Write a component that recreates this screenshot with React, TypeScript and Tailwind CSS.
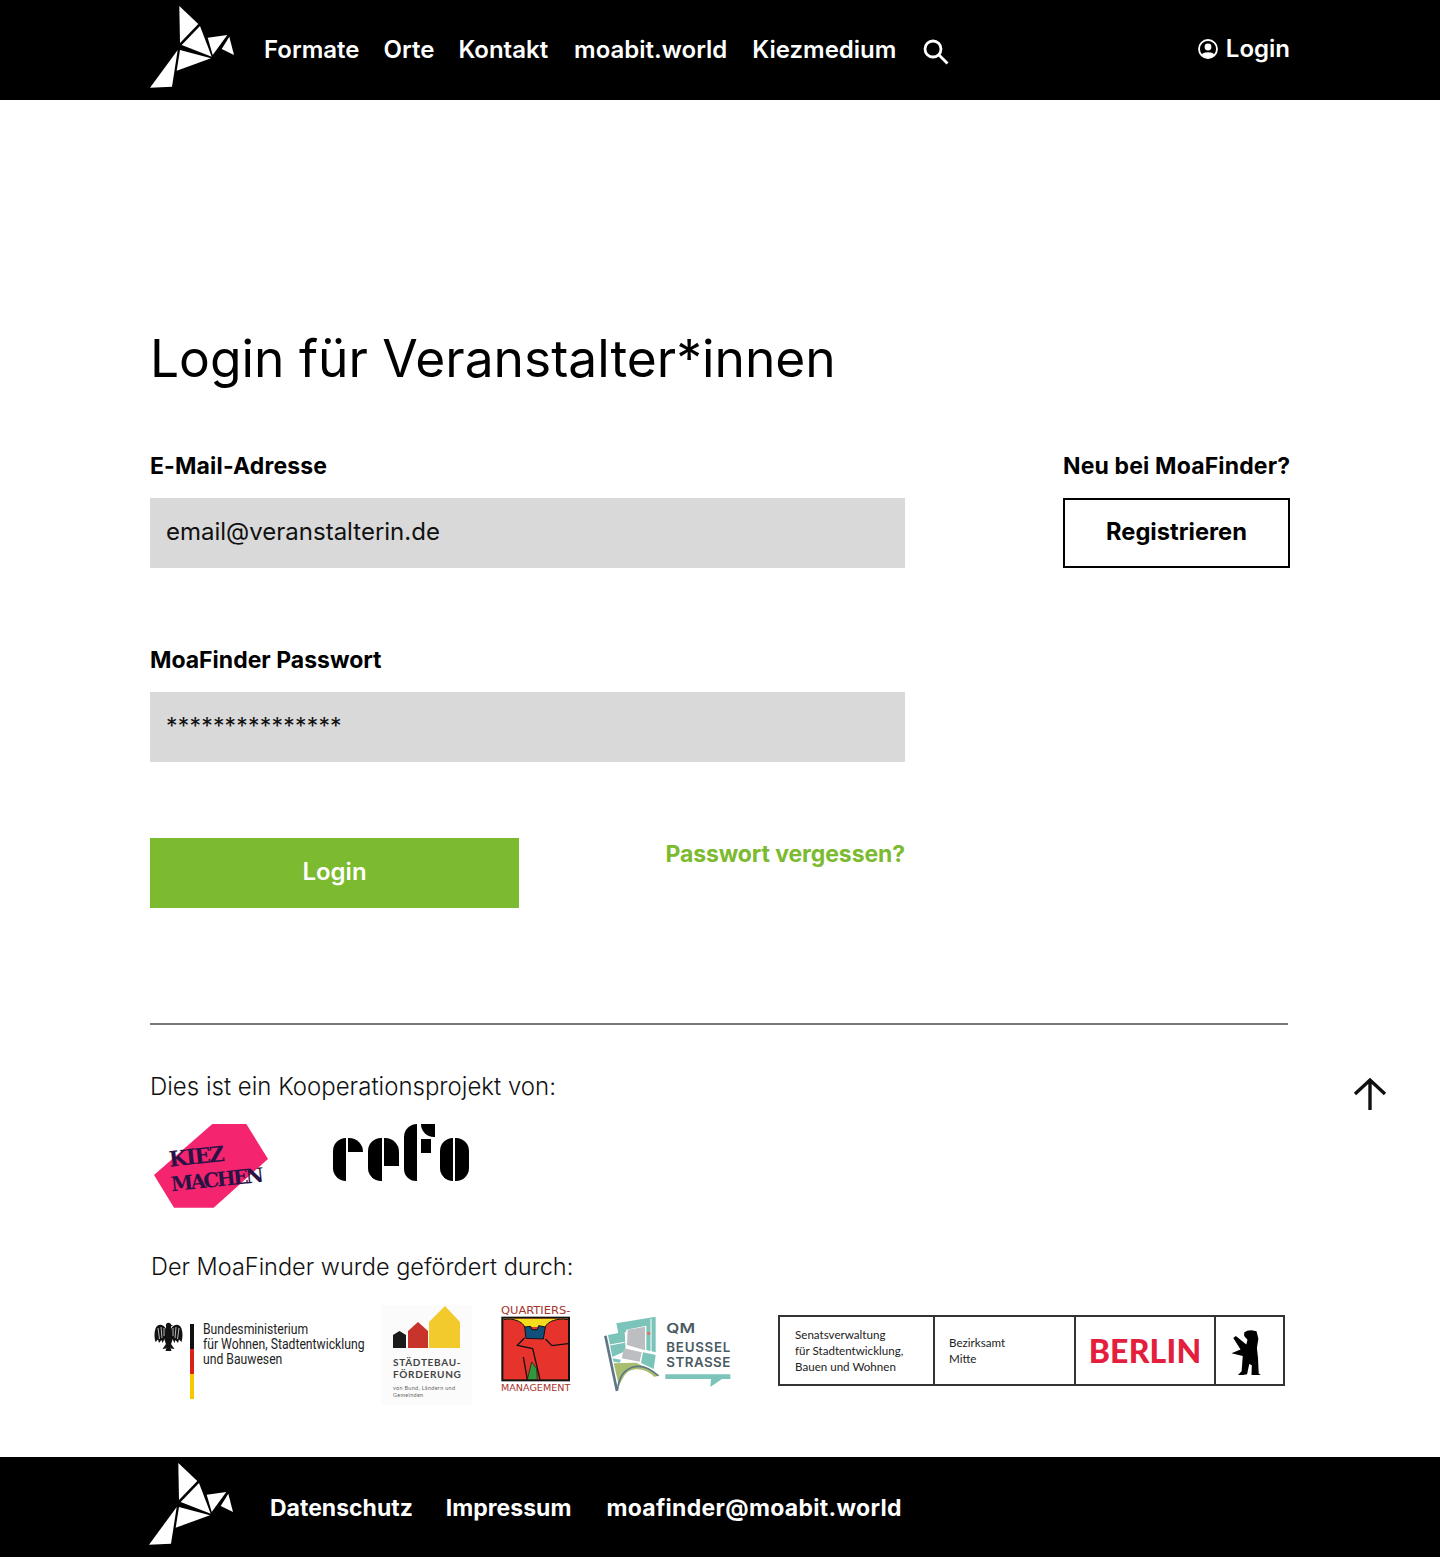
import React from 'react';

const font = { fontFamily: 'Inter, sans-serif' };

const BirdLogo: React.FC = () => (
  <svg width="85" height="83" viewBox="10 5 85 83" fill="#fff" aria-label="MoaFinder">
    <polygon points="39.3,6 58.3,24 40,43" />
    <polygon points="60,26 41.7,45 71.7,56.7" />
    <polygon points="67.7,37.7 87.3,35 72.7,55" />
    <polygon points="89.3,36.7 94,55 81.7,49" />
    <polygon points="40,50 71,58.3 36.7,70.7" />
    <polygon points="37.7,50 32,86.7 10,87.7" />
  </svg>
);

const SearchIcon: React.FC = () => (
  <svg width="26" height="26" viewBox="0 0 26 26" fill="none" stroke="#fff" strokeWidth="2.8">
    <circle cx="10" cy="10" r="8" />
    <line x1="16" y1="16" x2="24.5" y2="24.5" />
  </svg>
);

const UserIcon: React.FC = () => (
  <svg width="20" height="20" viewBox="0 0 20 20" fill="none" stroke="#fff" strokeWidth="1.8">
    <circle cx="10" cy="10" r="9" />
    <circle cx="10" cy="8" r="3.4" fill="#fff" stroke="none" />
    <path d="M3.8 15.5 C5.5 12.5 14.5 12.5 16.2 15.5 C14 19.5 6 19.5 3.8 15.5Z" fill="#fff" stroke="none" />
  </svg>
);

const KiezMachen: React.FC = () => (
  <svg width="116" height="84" viewBox="43 42 348 252" aria-label="Kiez machen">
    <polygon points="218,42 320,42 385,147 222,293 103,293 43,195" fill="#f4246f" />
    <g fontFamily="'DejaVu Serif', serif" fontWeight="700" fill="#2a1245">
      <text x="90" y="170" fontSize="64" transform="rotate(-6 90 170)" textLength="168">KIEZ</text>
      <text x="96" y="244" fontSize="60" transform="rotate(-6 96 244)" textLength="280">MACHEN</text>
    </g>
  </svg>
);

// stencil logo, built from rounded blocks
const RefoLogo: React.FC = () => (
  <div className="flex items-end gap-[5px] h-[58px]" aria-label="refo">
    <div className="flex gap-[2px] items-start">
      <div className="w-[13px] h-[43px] bg-black rounded-l-[13px]" />
      <div className="w-[15px] h-[14px] bg-black rounded-tr-[14px]" />
    </div>
    <div className="flex gap-[2px] items-start">
      <div className="w-[14px] h-[43px] bg-black rounded-l-[13px]" />
      <div className="w-[15px] h-[28px] bg-black rounded-tr-[14px]" />
    </div>
    <div className="flex gap-[4px] items-start">
      <div className="w-[13px] h-[57px] bg-black rounded-tl-[14px] rounded-bl-[13px]" />
      <div className="flex flex-col gap-[2px]">
        <div className="w-[14px] h-[13px] bg-black rounded-bl-[13px]" />
        <div className="w-[10px] h-[14px] bg-black" />
      </div>
    </div>
    <div className="flex gap-[2px] items-start">
      <div className="w-[13px] h-[43px] bg-black rounded-l-[13px]" />
      <div className="w-[14px] h-[43px] bg-black rounded-r-[13px]" />
    </div>
  </div>
);

const Eagle: React.FC = () => (
  <svg width="29" height="29" viewBox="0 0 29 29" fill="#111" aria-hidden="true">
    <circle cx="14.5" cy="3.4" r="2.6" />
    <polygon points="16,2.4 19,3.6 16,5" />
    <polygon points="12,5 17,5 19,16 16.5,24 12.5,24 10,16" />
    <path d="M12 7 C9 1.5 3.5 1.5 1.5 6.5 C0 11 .3 16 1.5 20 L4 17.5 L5 21 L7.5 18 L8.5 21 L11 16Z" />
    <path d="M17 7 C20 1.5 25.5 1.5 27.5 6.5 C29 11 28.7 16 27.5 20 L25 17.5 L24 21 L21.5 18 L20.5 21 L18 16Z" />
    <path d="M4 6 L5.5 17 M7 5 L8 16 M10 6 L10 14 M25 6 L23.5 17 M22 5 L21 16 M19 6 L19 14" stroke="#fff" strokeWidth="0.7" fill="none" />
    <polygon points="12,22 8.5,27 12,26.5 14,24" />
    <polygon points="17,22 20.5,27 17,26.5 15,24" />
    <polygon points="13,24 16,24 17.5,29 11.5,29" />
  </svg>
);

const Bund: React.FC = () => (
  <div className="flex items-start w-[220px] h-[95px] pt-[19px]">
    <div className="w-[29px] ml-[4px] mt-[-2px]"><Eagle /></div>
    <div className="ml-[7px] flex flex-col w-[4px] shrink-0">
      <div className="h-[25px] bg-[#111]" />
      <div className="h-[25px] bg-[#d8201c]" />
      <div className="h-[25px] bg-[#f5c800]" />
    </div>
    <div className="ml-[9px] text-[14px] leading-[15px] text-[#222] origin-left scale-x-[0.87] whitespace-nowrap mt-[-2px]" style={{ fontFamily: 'Roboto, sans-serif' }}>
      Bundesministerium<br />für Wohnen, Stadtentwicklung<br />und Bauwesen
    </div>
  </div>
);

const Staedtebau: React.FC = () => (
  <div className="w-[91px] h-[100px] bg-[#fbfbfb] ml-[11px] flex flex-col items-start pl-[12px] pt-[1px]" style={{ fontFamily: 'Lato, sans-serif' }}>
    <svg width="68" height="43" viewBox="0 0 68 43" aria-hidden="true">
      <polygon points="0,42 0,29 6.5,25 13,29 13,42" fill="#1b1b1b" />
      <polygon points="15,42 15,25 25,16 35,25 35,42" fill="#c8342c" />
      <polygon points="36,42 36,16 52,0 67,16 67,42" fill="#f2ca2c" />
    </svg>
    <div className="mt-[7px] text-[10px] leading-[12px] font-bold tracking-[0.7px] text-[#444] whitespace-nowrap">STÄDTEBAU-<br />FÖRDERUNG</div>
    <div className="mt-[5px] text-[5.5px] leading-[7px] tracking-[0.3px] text-[#666] whitespace-nowrap">von Bund, Ländern und<br />Gemeinden</div>
  </div>
);

const Quartiers: React.FC = () => (
  <svg className="ml-[28px] mt-[-3px]" width="72" height="96" viewBox="30 25 216 288" aria-label="Quartiersmanagement">
    <text x="33" y="62" fontFamily="'DejaVu Sans Condensed', 'DejaVu Sans', sans-serif" fontSize="32" fill="#a8322c" textLength="208" lengthAdjust="spacingAndGlyphs">QUARTIERS-</text>
    <rect x="37" y="72" width="200" height="188" fill="#e6342c" stroke="#111" strokeWidth="6" />
    <path d="M40 75 L234 75 L234 78 C200 72 172 84 166 100 L104 100 C98 84 70 72 40 78Z" fill="#f5dc1e" />
    <path d="M40 78 C70 72 98 84 104 100 M234 78 C200 72 172 84 166 100" fill="none" stroke="#111" strokeWidth="3" />
    <path d="M104 100 L122 98 L126 108 L142 108 L146 96 L166 100 L160 136 L108 134Z" fill="#10507a" stroke="#111" strokeWidth="3" />
    <path d="M112 258 L125 205 L140 225 L142 258Z" fill="#2e9a3c" stroke="#111" strokeWidth="2" />
    <path d="M104 132 L82 155 L128 165 L150 258 M166 136 L186 156 L234 150 M112 258 L100 190" fill="none" stroke="#111" strokeWidth="4" />
    <text x="33" y="291" fontFamily="'DejaVu Sans Condensed', 'DejaVu Sans', sans-serif" fontSize="28" fill="#a8322c" textLength="208" lengthAdjust="spacingAndGlyphs">MANAGEMENT</text>
  </svg>
);

const Beussel: React.FC = () => (
  <svg className="ml-[31px] mt-[10px]" width="130" height="80" viewBox="340 60 390 240" aria-label="QM Beusselstrasse">
    <polygon points="380,85 498,65 498,172 470,165 470,92 410,104 408,112 386,115" fill="#7cc4ba" />
    <polygon points="355,120 405,110 408,168 368,186" fill="#7cc4ba" />
    <polygon points="414,104 466,95 466,166 412,150" fill="#bcbec2" />
    <polygon points="403,160 456,172 450,200 396,190" fill="#bcbec2" />
    <polygon points="460,172 498,180 492,222 454,204" fill="#7cc4ba" />
    <polygon points="368,190 394,194 390,203 372,200" fill="#7cc4ba" />
    <path d="M484 72 L484 170 M360 150 L405 142" stroke="#fff" strokeWidth="3" fill="none" />
    <path d="M372 205 L440 203 L510 240 L494 246 C470 218 420 212 402 245 L388 272Z" fill="#a8bd6e" />
    <path d="M347 122 L382 288" stroke="#5e7686" strokeWidth="8" fill="none" />
    <path d="M384 284 C390 215 450 190 506 243" stroke="#5e7686" strokeWidth="5" fill="none" />
    <circle cx="477" cy="115" r="5" fill="#ee6a5a" />
    <g fontFamily="Inter, sans-serif" fontWeight="600" fill="#4a5a63">
      <text x="530" y="114" fontSize="40" textLength="86" lengthAdjust="spacingAndGlyphs">QM</text>
      <text x="530" y="171" fontSize="40" textLength="192">BEUSSEL</text>
      <text x="530" y="217" fontSize="40" textLength="192">STRASSE</text>
    </g>
    <polygon points="527,238 722,238 722,252 697,252 662,276 664,252 527,252" fill="#7cc4ba" />
  </svg>
);

const Bear: React.FC = () => (
  <svg width="48" height="48" viewBox="30 20 132 132" fill="#000" aria-hidden="true">
    <path d="M80 35 L88 30 L100 29 L114 32 L119 52 L115 78 L118 105 L120 148 L130 155 L100 155 L101 125 L94 122 L88 150 L60 155 L73 142 L76 100 L45 92 L70 82 L50 50 L57 45 L86 68 L89 55 L80 45Z" />
  </svg>
);

const BerlinBox: React.FC = () => (
  <div className="ml-[45px] mt-[10px] w-[507px] h-[71px] border-2 border-[#333] flex text-[#222]" style={{ fontFamily: 'Lato, sans-serif' }}>
    <div className="w-[155px] border-r-2 border-[#333] pl-[15px] flex items-center text-[11.6px] leading-[16px] whitespace-nowrap">
      <span>Senatsverwaltung<br />für Stadtentwicklung,<br />Bauen und Wohnen</span>
    </div>
    <div className="w-[141px] border-r-2 border-[#333] pl-[14px] flex items-center text-[11.6px] leading-[16px]">
      <span>Bezirksamt<br />Mitte</span>
    </div>
    <div className="w-[140px] border-r-2 border-[#333] flex items-center justify-center text-[32px] font-black tracking-[0.2px] text-[#e31f3d]">
      BERLIN
    </div>
    <div className="flex-1 flex items-center justify-center"><Bear /></div>
  </div>
);

const App: React.FC = () => {
  return (
    <div className="relative bg-white min-h-[1557px] flex flex-col" style={font}>
      <header className="h-[100px] bg-black text-white px-[150px] flex items-center">
        <div className="mt-[-8px]"><BirdLogo /></div>
        <nav className="ml-[29px] flex items-center gap-[25px] text-[24px] font-semibold">
          <a href="#">Formate</a>
          <a href="#" className="ml-[-1px]">Orte</a>
          <a href="#" className="ml-[-1px]">Kontakt</a>
          <a href="#" className="ml-[1px]">moabit.world</a>
          <a href="#">Kiezmedium</a>
          <button className="ml-[2px] mt-[4px]" aria-label="Suche"><SearchIcon /></button>
        </nav>
        <a href="#" className="ml-auto flex items-center gap-[8px] text-[24px] font-semibold mt-[-2px]">
          <UserIcon />
          Login
        </a>
      </header>

      <main className="px-[150px] flex-1">
        <h1 className="mt-[224px] text-[51.5px] leading-[68px] font-normal text-black">Login für Veranstalter*innen</h1>

        <div className="mt-[60px] flex justify-between items-start">
          <div className="w-[755px]">
            <label className="block text-[23px] leading-[28px] font-bold tracking-[0.15px] text-black">E-Mail-Adresse</label>
            <input
              readOnly
              value="email@veranstalterin.de"
              className="mt-[18px] block w-full h-[70px] bg-[#d9d9d9] px-[16px] pb-[3px] text-[24px] text-[#111] outline-none"
            />
            <label className="mt-[78px] block text-[23px] leading-[28px] font-bold text-black">MoaFinder Passwort</label>
            <input
              readOnly
              value="***************"
              className="mt-[18px] block w-full h-[70px] bg-[#d9d9d9] px-[16px] pb-[3px] text-[23px] tracking-[0.2px] text-[#111] outline-none"
            />
            <div className="mt-[76px] flex justify-between items-start">
              <button className="w-[369px] h-[70px] bg-[#7cba2f] text-white text-[24px] font-semibold pb-[2px]">Login</button>
              <a href="#" className="text-[23px] leading-[32px] font-bold tracking-[-0.1px] text-[#7cba2f]">Passwort vergessen?</a>
            </div>
          </div>
          <div className="w-[227px]">
            <div className="text-[23px] leading-[28px] font-bold tracking-[0.15px] text-black whitespace-nowrap text-right">Neu bei MoaFinder?</div>
            <button className="mt-[18px] w-full h-[70px] border-2 border-black text-[23.7px] font-bold text-black pb-[2px]">Registrieren</button>
          </div>
        </div>

        <hr className="mt-[115px] w-[1138px] border-t-2 border-[#777]" />

        <p className="mt-[47px] text-[24px] leading-[30px] font-light text-[#111]">Dies ist ein Kooperationsprojekt von:</p>
        <div className="mt-[22px] flex items-start">
          <div className="ml-[4px]"><KiezMachen /></div>
          <div className="ml-[63px] mt-[-1px]"><RefoLogo /></div>
        </div>

        <p className="mt-[44px] ml-[1px] text-[23.5px] leading-[30px] font-light text-[#111]">Der MoaFinder wurde gefördert durch:</p>
        <div className="mt-[23px] flex items-start">
          <Bund />
          <Staedtebau />
          <Quartiers />
          <Beussel />
          <BerlinBox />
        </div>
      </main>

      <button className="absolute left-[1352px] top-[1076px]" aria-label="Nach oben">
        <svg width="36" height="36" viewBox="0 0 36 36" fill="none" stroke="#111" strokeWidth="3.4">
          <path d="M18 34 L18 4 M3 18 L18 4 L33 18" />
        </svg>
      </button>

      <footer className="h-[100px] bg-black text-white pl-[149px] flex items-center">
        <div className="mt-[-8px]"><BirdLogo /></div>
        <nav className="ml-[36px] mt-[2px] flex items-center text-[23px] font-bold">
          <a href="#">Datenschutz</a>
          <a href="#" className="ml-[33px]">Impressum</a>
          <a href="#" className="ml-[35px] tracking-[0.3px]">moafinder@moabit.world</a>
        </nav>
      </footer>
    </div>
  );
};

export default App;
